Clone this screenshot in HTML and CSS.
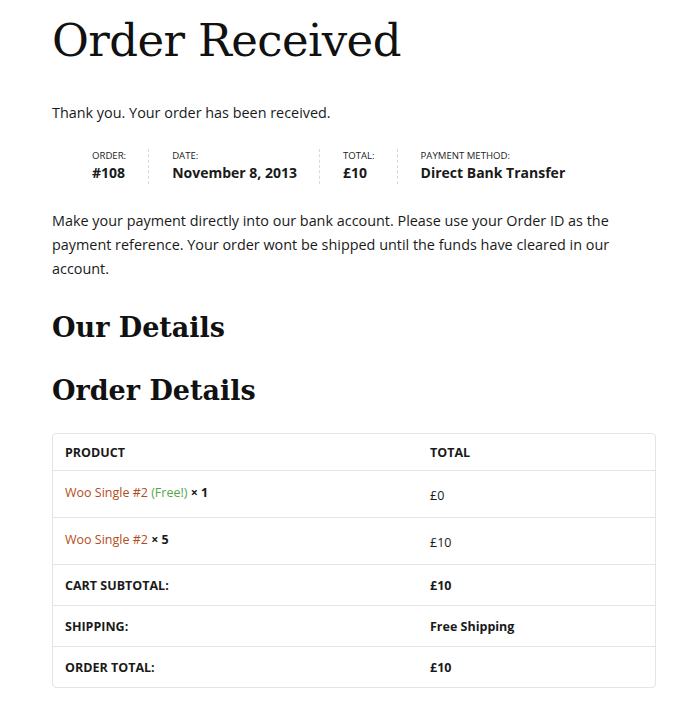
FILE: index.html
```html
<!DOCTYPE html>
<html>
<head>
<meta charset="utf-8">
<link rel="stylesheet" href="styles.css">
</head>
<body>
<main class="page">
  <h1 class="title">Order Received</h1>
  <p class="thanks">Thank you. Your order has been received.</p>
  <ul class="overview">
    <li class="ov-item"><span class="ov-label">Order:</span><strong class="ov-value">#108</strong></li>
    <li class="ov-item"><span class="ov-label">Date:</span><strong class="ov-value">November 8, 2013</strong></li>
    <li class="ov-item"><span class="ov-label">Total:</span><strong class="ov-value">£10</strong></li>
    <li class="ov-item"><span class="ov-label">Payment method:</span><strong class="ov-value">Direct Bank Transfer</strong></li>
  </ul>
  <p class="bacs">Make your payment directly into our bank account. Please use your Order ID as the payment reference. Your order wont be shipped until the funds have cleared in our account.</p>
  <h2 class="section-title">Our Details</h2>
  <h2 class="section-title">Order Details</h2>
  <table class="order-table">
    <thead>
      <tr><th class="col-product">Product</th><th class="col-total">Total</th></tr>
    </thead>
    <tbody>
      <tr class="item-row"><td class="item-name"><a class="product-link" href="#">Woo Single #2</a> <span class="free">(Free!)</span> <strong class="qty">× 1</strong></td><td class="price">£0</td></tr>
      <tr class="item-row"><td class="item-name"><a class="product-link" href="#">Woo Single #2</a> <strong class="qty">× 5</strong></td><td class="price">£10</td></tr>
    </tbody>
    <tfoot>
      <tr><th>Cart Subtotal:</th><td class="foot-val">£10</td></tr>
      <tr><th>Shipping:</th><td class="foot-val">Free Shipping</td></tr>
      <tr><th>Order Total:</th><td class="foot-val">£10</td></tr>
    </tfoot>
  </table>
</main>
</body>
</html>
```

FILE: styles.css
```css
html, body {
  margin: 0;
  padding: 0;
  background: #fff;
}
body {
  font-family: "Open Sans", "Noto Sans", sans-serif;
  color: #1a1a1a;
  font-size: 14.4px;
}
.page {
  padding: 0 26px 0 52px;
}
.title {
  font-family: "DejaVu Serif", serif;
  font-weight: normal;
  font-size: 45px;
  line-height: 1;
  margin: 0;
  padding-top: 18px;
  letter-spacing: -0.6px;
  color: #111;
}
.thanks {
  margin: 38px 0 0;
  line-height: 24px;
}
.overview {
  list-style: none;
  display: flex;
  margin: 24px 0 0;
  padding: 0 0 0 40px;
}
.ov-item {
  display: flex;
  flex-direction: column;
  padding: 0 22px 0 23px;
  border-right: 1px dashed #d8d8d8;
}
.ov-item:first-child { padding-left: 0; }
.ov-item:last-child { border-right: 0; }
.ov-label {
  font-size: 9.6px;
  text-transform: uppercase;
  line-height: 13px;
  color: #222;
}
.ov-value {
  font-size: 14px;
  line-height: 22px;
  font-weight: 700;
}
.bacs {
  margin: 25px 0 0;
  line-height: 24px;
}
.section-title {
  font-family: "DejaVu Serif", serif;
  font-weight: bold;
  font-size: 27px;
  line-height: 36px;
  margin: 29px 0 0;
  color: #111;
}
.section-title + .section-title { margin-top: 27px; }
.order-table {
  margin-top: 24px;
  width: 100%;
  border-collapse: separate;
  border-spacing: 0;
  border: 1px solid #e4e4e4;
  border-radius: 4px;
  font-size: 12.5px;
}
.order-table th, .order-table td {
  text-align: left;
  padding: 0 12px;
  border-top: 1px solid #e4e4e4;
}
.order-table thead th {
  border-top: 0;
  height: 36px;
  text-transform: uppercase;
  font-weight: 700;
}
.col-product { width: 341px; }
.item-row td { height: 47px; box-sizing: border-box; }
.item-name { padding-bottom: 3px !important; }
.price { padding-top: 3px !important; }
.product-link {
  color: #b34d21;
  text-decoration: none;
}
.free { color: #51a84a; }
.qty { font-weight: 700; }
.order-table tfoot th, .order-table tfoot td {
  height: 40px;
  font-weight: 700;
}
.order-table tfoot th { text-transform: uppercase; }
```
